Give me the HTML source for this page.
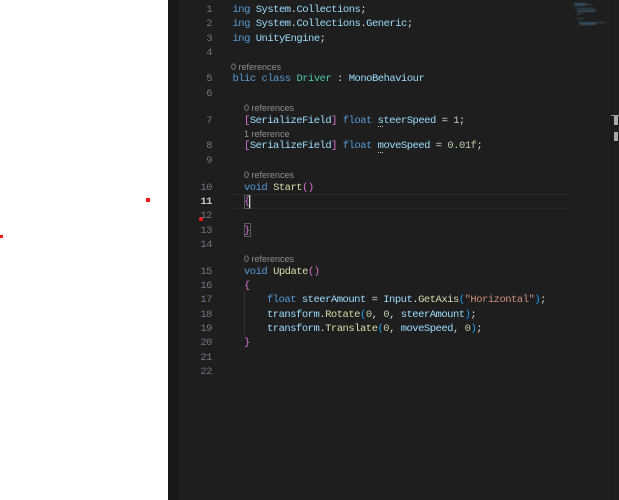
<!DOCTYPE html>
<html><head><meta charset="utf-8">
<style>
html,body{margin:0;padding:0;background:#fff}
#p{position:relative;width:619px;height:500px;overflow:hidden;background:#fff}
#ed{position:absolute;left:168px;top:0;width:451px;height:500px;background:#1e1e1e}
#strip{position:absolute;left:168px;top:0;width:11px;height:500px;background:#181818}
.l,.n,.r{position:absolute;white-space:pre;font-family:"Liberation Mono",monospace;font-size:10.5px;letter-spacing:-.49px;line-height:14px;height:14px}
.l{color:#d4d4d4;left:232.5px;filter:blur(.35px)}
.n{color:#6e7681;left:180px;width:32px;text-align:right;filter:blur(.3px)}
.r{font-family:"Liberation Sans",sans-serif;font-size:9px;letter-spacing:0;color:#8f8f8f;filter:blur(.3px)}
.k{color:#569cd6}.t{color:#4ec9b0}.v{color:#9cdcfe}.f{color:#dcdcaa}.m{color:#b5cea8}.s{color:#ce9178}
.p{color:#da70d6}.y{color:#ffd700}.b{color:#179fff}
.a{position:absolute}
#mm{position:absolute;left:0;top:0;width:619px;height:40px;filter:blur(.5px);opacity:.7}
</style></head><body><div id="p">
<div id="ed"></div><div id="strip"></div>

<div class="a" style="left:146px;top:198px;width:4px;height:4px;background:#ff1a1a"></div>
<div class="a" style="left:0;top:235px;width:3px;height:3px;background:#ff1a1a"></div>
<div class="a" style="left:198.5px;top:217px;width:4px;height:4px;border-radius:2px;background:#ff1a1a"></div>

<div class="a" style="left:232px;top:194px;width:336px;height:13px;border-top:1px solid #282828;border-bottom:1px solid #282828"></div>
<div class="a" style="left:244px;top:292px;width:1px;height:43px;background:#333"></div>

<div class="n" style="top:2.5px">1</div>
<div class="n" style="top:17px">2</div>
<div class="n" style="top:31.5px">3</div>
<div class="n" style="top:45.5px">4</div>
<div class="n" style="top:72px">5</div>
<div class="n" style="top:86.5px">6</div>
<div class="n" style="top:113.5px">7</div>
<div class="n" style="top:139px">8</div>
<div class="n" style="top:153.5px">9</div>
<div class="n" style="top:180.5px">10</div>
<div class="n" style="top:194.5px;color:#c6c6c6;font-weight:bold">11</div>
<div class="n" style="top:209px">12</div>
<div class="n" style="top:223.5px">13</div>
<div class="n" style="top:237.5px">14</div>
<div class="n" style="top:264.5px">15</div>
<div class="n" style="top:278.5px">16</div>
<div class="n" style="top:293px">17</div>
<div class="n" style="top:307.5px">18</div>
<div class="n" style="top:321.5px">19</div>
<div class="n" style="top:335.5px">20</div>
<div class="n" style="top:350.5px">21</div>
<div class="n" style="top:364.5px">22</div>

<div class="l" style="top:2.5px"><span class="k">ing</span> <span class="v">System</span>.<span class="v">Collections</span>;</div>
<div class="l" style="top:17px"><span class="k">ing</span> <span class="v">System</span>.<span class="v">Collections</span>.<span class="v">Generic</span>;</div>
<div class="l" style="top:31.5px"><span class="k">ing</span> <span class="v">UnityEngine</span>;</div>
<div class="r" style="left:231px;top:59.5px">0 references</div>
<div class="l" style="top:72px"><span class="k">blic class</span> <span class="t">Driver</span> : <span class="v">MonoBehaviour</span></div>
<div class="r" style="left:244px;top:100.5px">0 references</div>
<div class="l" style="left:244px;top:113.5px"><span class="p">[</span><span class="v">SerializeField</span><span class="p">]</span> <span class="k">float</span> <span class="v">steerSpeed</span> = <span class="m">1</span>;</div>
<div class="a" style="left:378px;top:126px;width:5px;height:1px;background:repeating-linear-gradient(90deg,#bbb 0 1px,transparent 1px 2px)"></div>
<div class="r" style="left:244px;top:126.5px">1 reference</div>
<div class="l" style="left:244px;top:139px"><span class="p">[</span><span class="v">SerializeField</span><span class="p">]</span> <span class="k">float</span> <span class="v">moveSpeed</span> = <span class="m">0.01f</span>;</div>
<div class="a" style="left:378px;top:151.5px;width:5px;height:1px;background:repeating-linear-gradient(90deg,#bbb 0 1px,transparent 1px 2px)"></div>
<div class="r" style="left:244px;top:168px">0 references</div>
<div class="l" style="left:244px;top:180.5px"><span class="k">void</span> <span class="f">Start</span><span class="p">()</span></div>
<div class="l" style="left:244px;top:194.5px"><span class="p">{</span></div>
<div class="a" style="left:244px;top:195px;width:5px;height:12px;border:1px solid #5a5a5a"></div>
<div class="a" style="left:249px;top:195px;width:1px;height:13px;background:#d0d0d0"></div>
<div class="l" style="left:244px;top:223.5px"><span class="p">}</span></div>
<div class="a" style="left:244px;top:223px;width:5px;height:12px;border:1px solid #5a5a5a"></div>
<div class="r" style="left:244px;top:252px">0 references</div>
<div class="l" style="left:244px;top:264.5px"><span class="k">void</span> <span class="f">Update</span><span class="p">()</span></div>
<div class="l" style="left:244px;top:278.5px"><span class="p">{</span></div>
<div class="l" style="left:267px;top:293px"><span class="k">float</span> <span class="v">steerAmount</span> = <span class="v">Input</span>.<span class="f">GetAxis</span><span class="b">(</span><span class="s">"Horizontal"</span><span class="b">)</span>;</div>
<div class="l" style="left:267px;top:307.5px"><span class="v">transform</span>.<span class="f">Rotate</span><span class="b">(</span><span class="m">0</span>, <span class="m">0</span>, <span class="v">steerAmount</span><span class="b">)</span>;</div>
<div class="l" style="left:267px;top:321.5px"><span class="v">transform</span>.<span class="f">Translate</span><span class="b">(</span><span class="m">0</span>, <span class="v">moveSpeed</span>, <span class="m">0</span><span class="b">)</span>;</div>
<div class="l" style="left:244px;top:335.5px"><span class="p">}</span></div>

<!-- minimap -->
<div id="mm">
<div class="a" style="left:574px;top:3px;width:12px;height:1px;background:#3c5f7a"></div>
<div class="a" style="left:574px;top:4px;width:18px;height:1px;background:#3c5f7a"></div>
<div class="a" style="left:574px;top:5px;width:11px;height:1px;background:#37566e"></div>
<div class="a" style="left:574px;top:8px;width:4px;height:1px;background:#2f4b60"></div>
<div class="a" style="left:578px;top:8px;width:16px;height:1px;background:#3c5f7a"></div>
<div class="a" style="left:577px;top:10px;width:19px;height:1px;background:#3a5a70"></div>
<div class="a" style="left:577px;top:11px;width:19px;height:1px;background:#3a5a70"></div>
<div class="a" style="left:577px;top:13px;width:6px;height:1px;background:#3e5a55"></div>
<div class="a" style="left:577px;top:14px;width:2px;height:1px;background:#444"></div>
<div class="a" style="left:577px;top:18px;width:7px;height:1px;background:#3e5a55"></div>
<div class="a" style="left:577px;top:20px;width:2px;height:1px;background:#444"></div>
<div class="a" style="left:579px;top:22px;width:20px;height:1px;background:#3c5f7a"></div>
<div class="a" style="left:599px;top:22px;width:6px;height:1px;background:#6e5740"></div>
<div class="a" style="left:579px;top:23px;width:17px;height:1px;background:#3c5f7a"></div>
<div class="a" style="left:579px;top:24px;width:18px;height:1px;background:#3c5f7a"></div>
<div class="a" style="left:577px;top:26px;width:2px;height:1px;background:#444"></div>
</div>

<!-- scrollbar strip and overlays -->
<div class="a" style="left:611px;top:0;width:1px;height:500px;background:#171717"></div>
<div class="a" style="left:611px;top:115px;width:8px;height:1px;background:#999"></div>
<div class="a" style="left:614px;top:116px;width:4px;height:9px;background:#a8a8a8"></div>
<div class="a" style="left:614px;top:132px;width:4px;height:9px;background:#a8a8a8"></div>
</div></body></html>
